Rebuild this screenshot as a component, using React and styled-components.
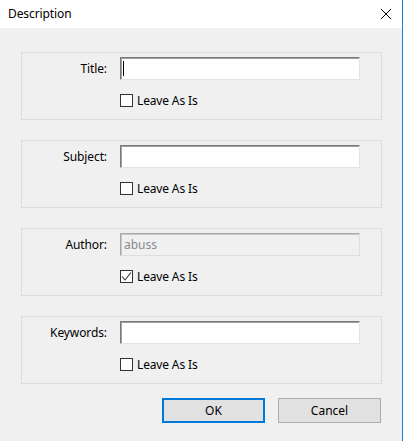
import React from "react";
import styled, { createGlobalStyle } from "styled-components";

const GlobalStyle = createGlobalStyle`
  html, body {
    margin: 0;
    padding: 0;
    background: #ffffff;
  }
  body {
    font-family: "Noto Sans", "Open Sans", sans-serif;
    font-size: 12px;
    color: #000;
  }
`;

const Window = styled.div`
  width: 402px;
  height: 441px;
  display: flex;
  flex-direction: column;
  background: #f0f0f0;
  border-right: 1px solid #1883d7;
`;

const TitleBar = styled.div`
  height: 28px;
  background: #ffffff;
  display: flex;
  align-items: center;
  justify-content: space-between;
  padding: 0 10px 1px 8px;
  box-sizing: border-box;
`;

const TitleText = styled.span`
  font-size: 12px;
  letter-spacing: -0.1px;
`;

const Body = styled.div`
  display: flex;
  flex-direction: column;
  gap: 20px;
  padding: 24px 0 0 21px;
`;

const Group = styled.div`
  width: 361px;
  height: 68px;
  box-sizing: border-box;
  border: 1px solid #dcdcdc;
  display: grid;
  grid-template-columns: 85px 240px;
  grid-template-rows: 23px 13px;
  column-gap: 13px;
  row-gap: 14px;
  padding-top: 4px;
  align-items: center;
`;

const Label = styled.label`
  text-align: right;
  white-space: nowrap;
  letter-spacing: -0.1px;
`;

const Field = styled.input`
  box-sizing: border-box;
  width: 240px;
  height: 23px;
  margin: 0;
  padding: 0 0 1px 3px;
  border: 1px solid;
  border-color: #7a7a7a #e3e3e3 #e3e3e3 #7a7a7a;
  box-shadow: inset 1px 1px 0 #a0a0a0;
  background-color: ${(p) => (p.disabled ? "#f0f0f0" : "#ffffff")};
  /* the blinking text cursor of the focused field */
  background-image: ${(p) =>
    p.$caret
      ? "linear-gradient(#000, #000)"
      : "none"};
  background-repeat: no-repeat;
  background-size: 1px 15px;
  background-position: 2px 3px;
  color: ${(p) => (p.disabled ? "#8a8a8a" : "#000")};
  font-family: inherit;
  font-size: 12px;
  outline: none;
  caret-color: transparent;
  &:disabled {
    border-color: #a8a8a8 #dedede #dedede #a8a8a8;
    box-shadow: inset 1px 1px 0 #c8c8c8;
  }
`;

const CheckRow = styled.div`
  grid-column: 2;
  display: flex;
  align-items: center;
  gap: 4px;
  height: 13px;
`;

const Box = styled.span`
  width: 13px;
  height: 13px;
  box-sizing: border-box;
  border: 1px solid #333333;
  background: #ffffff;
  display: flex;
  align-items: center;
  justify-content: center;
`;

const CheckText = styled.span`
  letter-spacing: -0.15px;
  line-height: 13px;
`;

const Buttons = styled.div`
  display: flex;
  justify-content: flex-end;
  gap: 13px;
  padding: 14px 21px 0 0;
`;

const Button = styled.button`
  width: 103px;
  height: 25px;
  box-sizing: border-box;
  margin: 0;
  padding: 0;
  background: #e1e1e1;
  border: ${(p) => (p.$primary ? "2px solid #0078d7" : "1px solid #adadad")};
  font-family: inherit;
  font-size: 12px;
  color: #000;
`;

const CloseIcon = () => (
  <svg width="12" height="12" viewBox="0 0 12 12">
    <path d="M1 1 L11 11 M11 1 L1 11" stroke="#000" strokeWidth="1" fill="none" />
  </svg>
);

const Tick = () => (
  <svg width="11" height="11" viewBox="0 0 11 11">
    <path d="M1 5.5 L4 9 L10 1.5" stroke="#333" strokeWidth="1.1" fill="none" />
  </svg>
);

const fields = [
  { label: "Title:", value: "", checked: false, caret: true },
  { label: "Subject:", value: "", checked: false },
  { label: "Author:", value: "abuss", checked: true, disabled: true },
  { label: "Keywords:", value: "", checked: false },
];

export default function App() {
  return (
    <>
      <GlobalStyle />
      <Window>
        <TitleBar>
          <TitleText>Description</TitleText>
          <CloseIcon />
        </TitleBar>
        <Body>
          {fields.map((f) => (
            <Group key={f.label}>
              <Label>{f.label}</Label>
              <Field
                defaultValue={f.value}
                disabled={f.disabled}
                $caret={f.caret}
                readOnly={!f.disabled}
              />
              <CheckRow>
                <Box>{f.checked && <Tick />}</Box>
                <CheckText>Leave As Is</CheckText>
              </CheckRow>
            </Group>
          ))}
        </Body>
        <Buttons>
          <Button $primary>OK</Button>
          <Button>Cancel</Button>
        </Buttons>
      </Window>
    </>
  );
}
